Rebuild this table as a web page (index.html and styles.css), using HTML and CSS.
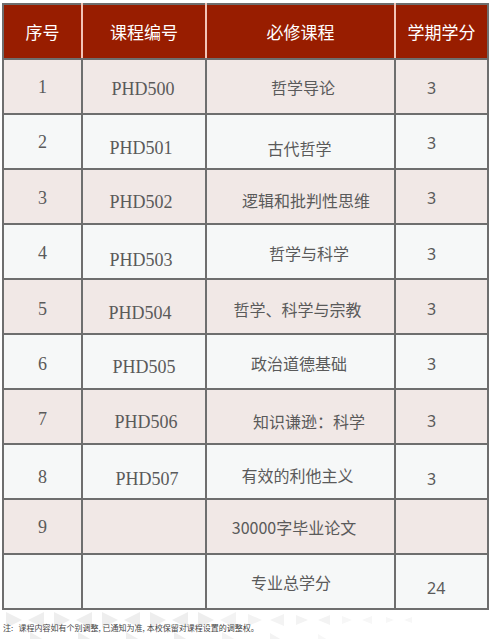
FILE: index.html
```html
<!DOCTYPE html>
<html lang="zh">
<head>
<meta charset="utf-8">
<link rel="stylesheet" href="styles.css">
</head>
<body>
<table class="grid">
  <colgroup>
    <col class="c1"><col class="c2"><col class="c3"><col class="c4">
  </colgroup>
  <thead>
    <tr><th>序号</th><th>课程编号</th><th>必修课程</th><th>学期学分</th></tr>
  </thead>
  <tbody>
    <tr class="odd"><td class="num">1</td><td class="code v4 x4">PHD500</td><td class="name v0 x3">哲学导论</td><td class="cr v2">3</td></tr>
    <tr class="even"><td class="num">2</td><td class="code v12 x2">PHD501</td><td class="name v12 x4">古代哲学</td><td class="cr v2">3</td></tr>
    <tr class="odd"><td class="num v2">3</td><td class="code v10 x2">PHD502</td><td class="name v6 x6">逻辑和批判性思维</td><td class="cr v2">3</td></tr>
    <tr class="even"><td class="num v2">4</td><td class="code v16 x2">PHD503</td><td class="name v2 x9">哲学与科学</td><td class="cr v4">3</td></tr>
    <tr class="odd"><td class="num v4">5</td><td class="code v12 x1">PHD504</td><td class="name v4 x2">哲学、科学与宗教</td><td class="cr v4">3</td></tr>
    <tr class="even"><td class="num v4">6</td><td class="code v10 x5">PHD505</td><td class="name v2 xm1">政治道德基础</td><td class="cr v4">3</td></tr>
    <tr class="odd"><td class="num v4">7</td><td class="code v10 x7">PHD506</td><td class="name v8 x9">知识谦逊：科学</td><td class="cr v8">3</td></tr>
    <tr class="even"><td class="num v10">8</td><td class="code v14 x8">PHD507</td><td class="name v6 x2">有效的利他主义</td><td class="cr v14">3</td></tr>
    <tr class="odd"><td class="num">9</td><td class="code"></td><td class="name xm6">30000字毕业论文</td><td class="cr"></td></tr>
    <tr class="even"><td class="num"></td><td class="code"></td><td class="name v0 xm9">专业总学分</td><td class="cr v12">24</td></tr>
  </tbody>
</table>
<div class="foot">
  <svg class="wm" width="490" height="32" viewBox="0 0 490 32" aria-hidden="true">
    <g fill="#eeeeee">
      <polygon points="6,2 22,10 6,18"/>
      <polygon points="44,2 28,10 44,18"/>
      <polygon points="54,2 70,10 54,18"/>
      <polygon points="92,2 76,10 92,18"/>
      <polygon points="102,2 118,10 102,18"/>
      <polygon points="140,2 124,10 140,18"/>
      <polygon points="150,2 166,10 150,18"/>
      <polygon points="188,2 172,10 188,18"/>
      <polygon points="198,2 214,10 198,18"/>
      <polygon points="30,22 44,30 30,38"/>
      <polygon points="78,22 92,30 78,38"/>
      <polygon points="126,22 140,30 126,38"/>
      <polygon points="174,22 188,30 174,38"/>
    </g>
    <g fill="#f3f3f3">
      <polygon points="236,2 220,10 236,18"/>
      <polygon points="248,4 262,10 248,16"/>
      <polygon points="284,4 270,10 284,16"/>
      <polygon points="296,5 308,10 296,15"/>
      <polygon points="330,5 318,10 330,15"/>
      <polygon points="222,22 236,30 222,38"/>
      <polygon points="270,23 282,30 270,37"/>
    </g>
    <g fill="#f7f7f7">
      <polygon points="342,6 352,10 342,14"/>
      <polygon points="372,6 362,10 372,14"/>
      <polygon points="386,7 394,10 386,13"/>
      <polygon points="412,7 404,10 412,13"/>
      <polygon points="318,24 328,30 318,36"/>
    </g>
  </svg>
  <p class="note">注:&nbsp;&nbsp;&nbsp;课程内容如有个别调整, 已通知为准, 本校保留对课程设置的调整权。</p>
</div>
</body>
</html>
```
FILE: styles.css
```css
html, body {
  margin: 0;
  padding: 0;
  background: #ffffff;
}

body {
  width: 490px;
  height: 639px;
  overflow: hidden;
  font-family: "Noto Sans CJK SC", "Noto Sans", sans-serif;
}

.grid {
  margin: 3px 0 0 2px;
  width: 485px;
  border-collapse: collapse;
  table-layout: fixed;
  border: 2px solid #6e6e6e;
}

.c1 { width: 79px; }
.c2 { width: 124px; }
.c3 { width: 189px; }
.c4 { width: 93px; }

tr { height: 55px; }

th {
  padding: 0;
  background: #981d00;
  color: #ffffff;
  font-weight: normal;
  font-size: 17px;
  line-height: 20px;
  text-align: center;
  border-left: 2px solid #f3c4b6;
  border-bottom: 2px solid #6e6e6e;
}

th:first-child { border-left: 2px solid #6e6e6e; }

td {
  padding: 0;
  line-height: 20px;
  border: 2px solid #6e6e6e;
  color: #5a5a5a;
  text-align: center;
  vertical-align: middle;
}

tr.odd td { background: #f1e8e6; }
tr.even td { background: #f6f8f8; }

.num {
  font-family: "Liberation Serif", serif;
  font-size: 18px;
}

.code {
  font-family: "Liberation Serif", serif;
  font-size: 18px;
}

.name {
  font-size: 16px;
  font-family: "Noto Sans CJK SC", sans-serif;
}

.cr {
  text-align: left;
  padding-left: 31px;
  font-family: "Noto Sans", sans-serif;
  font-size: 16px;
}

.v0 { padding-top: 0; }
.v2 { padding-top: 2px; }
.v4 { padding-top: 4px; }
.v6 { padding-top: 6px; }
.v8 { padding-top: 8px; }
.v10 { padding-top: 10px; }
.v12 { padding-top: 12px; }
.v14 { padding-top: 14px; }
.v16 { padding-top: 16px; }

.x1 { padding-right: 8px; }
.x2 { padding-right: 6px; }
.x4 { padding-right: 2px; }
.x5 { padding-right: 0; }
.x7 { padding-left: 4px; }
.x8 { padding-left: 6px; }
.x3 { padding-left: 5px; }
.x6 { padding-left: 11px; }
.x9 { padding-left: 17px; }
.xm1 { padding-right: 3px; }
.xm6 { padding-right: 13px; }
.xm9 { padding-right: 19px; }

.foot {
  position: relative;
  height: 30px;
}

.wm {
  position: absolute;
  left: 0;
  top: 0;
}

.note {
  position: relative;
  margin: 0;
  padding: 13px 0 0 3px;
  font-size: 8px;
  line-height: 10px;
  color: #444444;
  font-family: "Noto Sans CJK SC", sans-serif;
}
```
